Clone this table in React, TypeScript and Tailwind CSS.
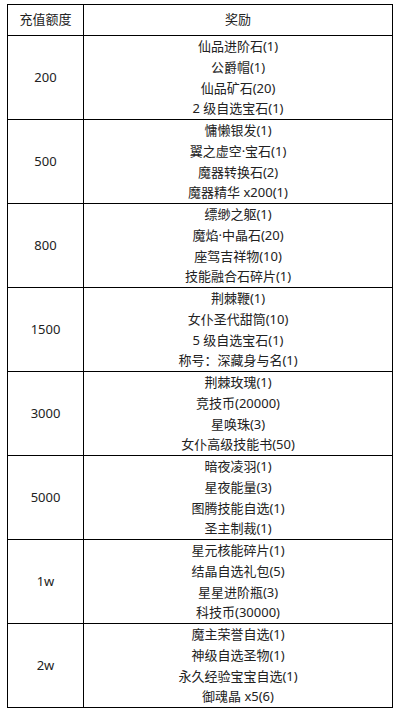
import React from 'react';

const groups: { amount: string; rewards: string[] }[] = [
  { amount: '200', rewards: ['仙品进阶石(1)', '公爵帽(1)', '仙品矿石(20)', '2 级自选宝石(1)'] },
  { amount: '500', rewards: ['慵懒银发(1)', '翼之虚空·宝石(1)', '魔器转换石(2)', '魔器精华 x200(1)'] },
  { amount: '800', rewards: ['缥缈之躯(1)', '魔焰·中晶石(20)', '座驾吉祥物(10)', '技能融合石碎片(1)'] },
  { amount: '1500', rewards: ['荆棘鞭(1)', '女仆圣代甜筒(10)', '5 级自选宝石(1)', '称号：深藏身与名(1)'] },
  { amount: '3000', rewards: ['荆棘玫瑰(1)', '竞技币(20000)', '星唤珠(3)', '女仆高级技能书(50)'] },
  { amount: '5000', rewards: ['暗夜凌羽(1)', '星夜能量(3)', '图腾技能自选(1)', '圣主制裁(1)'] },
  { amount: '1w', rewards: ['星元核能碎片(1)', '结晶自选礼包(5)', '星星进阶瓶(3)', '科技币(30000)'] },
  { amount: '2w', rewards: ['魔主荣誉自选(1)', '神级自选圣物(1)', '永久经验宝宝自选(1)', '御魂晶 x5(6)'] },
];

export default function App() {
  return (
    <div className="w-[400px] h-[712px] bg-white pt-[4px] pl-[7px] font-['Noto_Sans','Noto_Sans_CJK_SC',sans-serif] text-[13px] text-[#222]">
      <div className="w-[386px] border border-black">
        {/* header */}
        <div className="grid grid-cols-[76px_1fr] h-[30px]">
          <div className="border-r border-black flex items-center justify-center">充值额度</div>
          <div className="flex items-center justify-center">奖励</div>
        </div>
        {groups.map((g) => (
          <div key={g.amount} className="grid grid-cols-[76px_1fr] h-[84px] border-t border-black">
            <div className="border-r border-black flex items-center justify-center">{g.amount}</div>
            <div className="flex flex-col items-center justify-center">
              {g.rewards.map((r) => (
                <div key={r} className="h-[20.75px] leading-[20.75px] whitespace-nowrap">{r}</div>
              ))}
            </div>
          </div>
        ))}
      </div>
    </div>
  );
}
